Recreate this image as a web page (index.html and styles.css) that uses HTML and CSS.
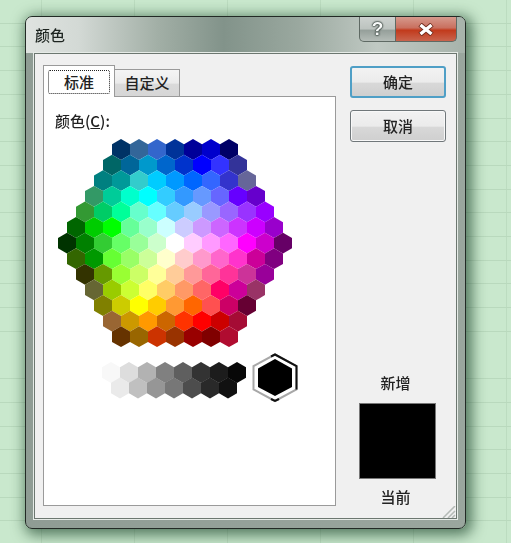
FILE: index.html
```html
<!DOCTYPE html>
<html lang="zh-CN">
<head>
<meta charset="utf-8">
<title>颜色</title>
<link rel="stylesheet" href="styles.css">
</head>
<body>
<div class="window">
  <div class="titlebar">
    <span class="title">颜色</span>
    <div class="caption-buttons">
      <div class="cap-btn help"><span>?</span></div>
      <div class="cap-btn close">
        <svg width="18" height="13" viewBox="0 0 18 13"><path d="M3 1.5 L15 11.5 M15 1.5 L3 11.5" class="x-shadow"/><path d="M3.5 2 L14.5 11 M14.5 2 L3.5 11" class="x-mark"/></svg>
      </div>
    </div>
  </div>
  <div class="panel">
    <div class="left">
      <div class="tabs">
        <div class="tab active"><span class="focus">标准</span></div>
        <div class="tab">自定义</div>
      </div>
      <div class="page">
        <div class="label">颜色(<u>C</u>):</div>
        <svg class="palette" width="291" height="280" viewBox="44 131 291 280">
          <defs>
            <polygon id="h" points="0,-10.4 9,-5.2 9,5.2 0,10.4 -9,5.2 -9,-5.2"/>
          </defs>
          <g transform="translate(121 149.5)">
            <use href="#h" x="0" fill="#003366"/><use href="#h" x="18" fill="#336699"/><use href="#h" x="36" fill="#3366CC"/><use href="#h" x="54" fill="#003399"/><use href="#h" x="72" fill="#000099"/><use href="#h" x="90" fill="#0000CC"/><use href="#h" x="108" fill="#000066"/>
          </g>
          <g transform="translate(112 165.1)">
            <use href="#h" x="0" fill="#006666"/><use href="#h" x="18" fill="#006699"/><use href="#h" x="36" fill="#0099CC"/><use href="#h" x="54" fill="#0066CC"/><use href="#h" x="72" fill="#0033CC"/><use href="#h" x="90" fill="#0000FF"/><use href="#h" x="108" fill="#3333FF"/><use href="#h" x="126" fill="#333399"/>
          </g>
          <g transform="translate(103 180.7)">
            <use href="#h" x="0" fill="#008080"/><use href="#h" x="18" fill="#009999"/><use href="#h" x="36" fill="#33CCCC"/><use href="#h" x="54" fill="#00CCFF"/><use href="#h" x="72" fill="#0099FF"/><use href="#h" x="90" fill="#0066FF"/><use href="#h" x="108" fill="#3366FF"/><use href="#h" x="126" fill="#3333CC"/><use href="#h" x="144" fill="#666699"/>
          </g>
          <g transform="translate(94 196.3)">
            <use href="#h" x="0" fill="#339966"/><use href="#h" x="18" fill="#00CC99"/><use href="#h" x="36" fill="#00FFCC"/><use href="#h" x="54" fill="#00FFFF"/><use href="#h" x="72" fill="#33CCFF"/><use href="#h" x="90" fill="#3399FF"/><use href="#h" x="108" fill="#6699FF"/><use href="#h" x="126" fill="#6666FF"/><use href="#h" x="144" fill="#6600FF"/><use href="#h" x="162" fill="#6600CC"/>
          </g>
          <g transform="translate(85 211.9)">
            <use href="#h" x="0" fill="#339933"/><use href="#h" x="18" fill="#00CC66"/><use href="#h" x="36" fill="#00FF99"/><use href="#h" x="54" fill="#66FFCC"/><use href="#h" x="72" fill="#66FFFF"/><use href="#h" x="90" fill="#66CCFF"/><use href="#h" x="108" fill="#99CCFF"/><use href="#h" x="126" fill="#9999FF"/><use href="#h" x="144" fill="#9966FF"/><use href="#h" x="162" fill="#9933FF"/><use href="#h" x="180" fill="#9900FF"/>
          </g>
          <g transform="translate(76 227.5)">
            <use href="#h" x="0" fill="#006600"/><use href="#h" x="18" fill="#00CC00"/><use href="#h" x="36" fill="#00FF00"/><use href="#h" x="54" fill="#66FF99"/><use href="#h" x="72" fill="#99FFCC"/><use href="#h" x="90" fill="#CCFFFF"/><use href="#h" x="108" fill="#CCCCFF"/><use href="#h" x="126" fill="#CC99FF"/><use href="#h" x="144" fill="#CC66FF"/><use href="#h" x="162" fill="#CC33FF"/><use href="#h" x="180" fill="#CC00FF"/><use href="#h" x="198" fill="#9900CC"/>
          </g>
          <g transform="translate(67 243.1)">
            <use href="#h" x="0" fill="#003300"/><use href="#h" x="18" fill="#008000"/><use href="#h" x="36" fill="#33CC33"/><use href="#h" x="54" fill="#66FF66"/><use href="#h" x="72" fill="#99FF99"/><use href="#h" x="90" fill="#CCFFCC"/><use href="#h" x="108" fill="#FFFFFF"/><use href="#h" x="126" fill="#FFCCFF"/><use href="#h" x="144" fill="#FF99FF"/><use href="#h" x="162" fill="#FF66FF"/><use href="#h" x="180" fill="#FF00FF"/><use href="#h" x="198" fill="#CC00CC"/><use href="#h" x="216" fill="#660066"/>
          </g>
          <g transform="translate(76 258.7)">
            <use href="#h" x="0" fill="#336600"/><use href="#h" x="18" fill="#009900"/><use href="#h" x="36" fill="#66FF33"/><use href="#h" x="54" fill="#99FF66"/><use href="#h" x="72" fill="#CCFF99"/><use href="#h" x="90" fill="#FFFFCC"/><use href="#h" x="108" fill="#FFCCCC"/><use href="#h" x="126" fill="#FF99CC"/><use href="#h" x="144" fill="#FF66CC"/><use href="#h" x="162" fill="#FF33CC"/><use href="#h" x="180" fill="#CC0099"/><use href="#h" x="198" fill="#800080"/>
          </g>
          <g transform="translate(85 274.3)">
            <use href="#h" x="0" fill="#333300"/><use href="#h" x="18" fill="#669900"/><use href="#h" x="36" fill="#99FF33"/><use href="#h" x="54" fill="#CCFF66"/><use href="#h" x="72" fill="#FFFF99"/><use href="#h" x="90" fill="#FFCC99"/><use href="#h" x="108" fill="#FF9999"/><use href="#h" x="126" fill="#FF6699"/><use href="#h" x="144" fill="#FF3399"/><use href="#h" x="162" fill="#CC3399"/><use href="#h" x="180" fill="#990099"/>
          </g>
          <g transform="translate(94 289.9)">
            <use href="#h" x="0" fill="#666633"/><use href="#h" x="18" fill="#99CC00"/><use href="#h" x="36" fill="#CCFF33"/><use href="#h" x="54" fill="#FFFF66"/><use href="#h" x="72" fill="#FFCC66"/><use href="#h" x="90" fill="#FF9966"/><use href="#h" x="108" fill="#FF6666"/><use href="#h" x="126" fill="#FF0066"/><use href="#h" x="144" fill="#CC0099"/><use href="#h" x="162" fill="#993366"/>
          </g>
          <g transform="translate(103 305.5)">
            <use href="#h" x="0" fill="#808000"/><use href="#h" x="18" fill="#CCCC00"/><use href="#h" x="36" fill="#FFFF00"/><use href="#h" x="54" fill="#FFCC00"/><use href="#h" x="72" fill="#FF9933"/><use href="#h" x="90" fill="#FF6600"/><use href="#h" x="108" fill="#FF5050"/><use href="#h" x="126" fill="#CC0066"/><use href="#h" x="144" fill="#660033"/>
          </g>
          <g transform="translate(112 321.1)">
            <use href="#h" x="0" fill="#996633"/><use href="#h" x="18" fill="#CC9900"/><use href="#h" x="36" fill="#FF9900"/><use href="#h" x="54" fill="#CC6600"/><use href="#h" x="72" fill="#FF3300"/><use href="#h" x="90" fill="#FF0000"/><use href="#h" x="108" fill="#CC0000"/><use href="#h" x="126" fill="#A50C35"/>
          </g>
          <g transform="translate(121 336.7)">
            <use href="#h" x="0" fill="#663300"/><use href="#h" x="18" fill="#996600"/><use href="#h" x="36" fill="#CC3300"/><use href="#h" x="54" fill="#993300"/><use href="#h" x="72" fill="#990000"/><use href="#h" x="90" fill="#800000"/><use href="#h" x="108" fill="#B00C30"/>
          </g>
          <g transform="translate(111 372.5)">
            <use href="#h" x="0" fill="#F8F8F8"/><use href="#h" x="18" fill="#DDDDDD"/><use href="#h" x="36" fill="#B2B2B2"/><use href="#h" x="54" fill="#808080"/><use href="#h" x="72" fill="#5F5F5F"/><use href="#h" x="90" fill="#333333"/><use href="#h" x="108" fill="#1C1C1C"/><use href="#h" x="126" fill="#080808"/>
          </g>
          <g transform="translate(120 388)">
            <use href="#h" x="0" fill="#EAEAEA"/><use href="#h" x="18" fill="#C0C0C0"/><use href="#h" x="36" fill="#969696"/><use href="#h" x="54" fill="#777777"/><use href="#h" x="72" fill="#4D4D4D"/><use href="#h" x="90" fill="#292929"/><use href="#h" x="108" fill="#111111"/>
          </g>
          <polygon points="275,354.5 296.5,366 296.5,389.5 275,401 253.5,389.5 253.5,366" class="sel-outer"/>
          <path d="M271,356.5 L275,354.5 L296.5,366 L296.5,389.5 M279,399 L275,401 L271,399" class="sel-dark"/>
          <polygon points="275,359 292,368.5 292,387 275,396 258,387 258,368.5" class="sel-inner"/>
        </svg>
      </div>
    </div>
    <div class="right">
      <div class="btn default">确定</div>
      <div class="btn">取消</div>
      <div class="preview">
        <div class="caption">新增</div>
        <div class="swatch"></div>
        <div class="caption">当前</div>
      </div>
    </div>
    <svg class="grip" width="14" height="12" viewBox="0 0 14 12"><path d="M13 0 L1 12 M13 5 L6 12 M13 9 L10 12" class="grip-line"/></svg>
  </div>
</div>
</body>
</html>
```
FILE: styles.css
```css
* { box-sizing: border-box; }
html, body { margin: 0; height: 100%; }
body {
  width: 511px;
  height: 543px;
  overflow: hidden;
  padding: 16px 0 0 25px;
  font-family: "Noto Sans CJK SC", "Noto Sans", sans-serif;
  color: #222;
  background-color: #c9e8cd;
  background-image:
    repeating-linear-gradient(to bottom, transparent 0, transparent 22.7px, #b9d9bd 22.7px, #b9d9bd 23.7px),
    repeating-linear-gradient(to right, transparent 0, transparent 41px, #bcdcc0 41px, #bcdcc0 42px, transparent 42px, transparent 93px);
}
.window {
  position: relative;
  width: 441px;
  height: 513px;
  display: flex;
  flex-direction: column;
  border: 1px solid #222a25;
  border-radius: 7px;
  padding: 0 8px 9px 8px;
  background: linear-gradient(to right, #8f9c94 0, #9aa69e 100%);
  box-shadow: 3px 3px 14px 3px rgba(20, 60, 35, 0.65);
  filter: blur(0.35px);
}
.titlebar {
  flex: none;
  height: 36px;
  margin: 0 -8px;
  padding: 0 8px 0 9px;
  display: flex;
  justify-content: space-between;
  border-radius: 6px 6px 0 0;
  background: linear-gradient(to right, #dfe3e0 0, #d3d9d5 12%, #a2afa6 30%, #82938a 45%, #9aa89f 62%, #c0c9c3 80%, #a7b3ab 100%);
}
.title {
  font-size: 15px;
  font-weight: 500;
  line-height: 35px;
  color: #1d2420;
}
.caption-buttons { display: flex; align-items: flex-start; }
.cap-btn {
  height: 25px;
  display: flex;
  align-items: center;
  justify-content: center;
  border: 1px solid #5f6a64;
  border-top: none;
}
.help {
  width: 37px;
  border-radius: 0 0 0 5px;
  background: linear-gradient(to bottom, #cdd2cf 0, #bcc3bf 50%, #959f9a 55%, #b4bcb7 100%);
  font-family: "Liberation Sans", sans-serif;
  font-size: 19px;
  font-weight: 700;
  color: #f8faf9;
  text-shadow: 0 0 1px #1d2a24, 0 0 2px #1d2a24, 0 0 2px #1d2a24;
}
.close {
  width: 61px;
  border-left: none;
  border-radius: 0 0 5px 0;
  background: linear-gradient(to bottom, #d69a8d 0, #c9705f 45%, #c23a1c 55%, #c9644d 100%);
}
.close svg { margin-top: 1px; }
.x-shadow { fill: none; stroke: #6f2a1c; stroke-width: 5; }
.x-mark { fill: none; stroke: #fff; stroke-width: 3.4; }
.panel {
  position: relative;
  flex: 1;
  display: flex;
  padding: 12px 10px 12px 8px;
  gap: 14px;
  background: #f0f0f0;
  border: 1px solid #6c7770;
  box-shadow: 0 0 0 1px #e6ebe7;
}
.left { width: 293px; display: flex; flex-direction: column; }
.tabs { display: flex; align-items: flex-end; height: 31px; margin-bottom: -1px; }
.tab {
  position: relative;
  width: 65px;
  height: 28px;
  font-size: 15px;
  font-weight: 500;
  line-height: 25px;
  text-align: center;
  border: 1px solid #9a9a9a;
  border-left: none;
  background: linear-gradient(to bottom, #f4f4f4 0, #ebebeb 50%, #dadada 55%, #d6d6d6 100%);
}
.tab.active {
  width: 72px;
  height: 32px;
  padding: 4px;
  border-left: 1px solid #9a9a9a;
  border-bottom: none;
  background: #fff;
  z-index: 1;
}
.focus {
  display: block;
  width: 62px;
  height: 24px;
  line-height: 22px;
  border: 1px dotted #222;
  border-radius: 2px;
}
.page {
  flex: 1;
  background: #fff;
  border: 1px solid #9a9a9a;
  padding-top: 14px;
}
.label {
  font-size: 15px;
  font-weight: 500;
  line-height: 20px;
  padding-left: 11px;
}
.palette { display: block; }
.sel-outer { fill: #fff; stroke: #a8a8a8; stroke-width: 2; }
.sel-dark { fill: none; stroke: #111; stroke-width: 2; }
.sel-inner { fill: #000; }
.right { width: 96px; display: flex; flex-direction: column; gap: 12px; margin-bottom: -1px; }
.btn {
  height: 32px;
  font-size: 15px;
  font-weight: 500;
  line-height: 29px;
  text-align: center;
  border: 1px solid #70777a;
  border-radius: 3px;
  background: linear-gradient(to bottom, #f2f2f2 0, #ebebeb 50%, #d8d8d8 55%, #cfcfcf 100%);
  box-shadow: inset 0 0 0 1px #f8f8f8;
}
.btn.default {
  border: 2px solid #4f9fc6;
  line-height: 27px;
  box-shadow: none;
}
.preview {
  flex: 1;
  display: flex;
  flex-direction: column;
  justify-content: flex-end;
  align-items: center;
  padding-right: 1px;
}
.caption { font-size: 15px; font-weight: 500; line-height: 20px; margin-right: 4px; }
.swatch {
  width: 77px;
  height: 76px;
  margin: 10px 0 8px;
  background: #000;
  border: 1px solid #777;
}
.grip { position: absolute; right: 0; bottom: 0; }
.grip-line { fill: none; stroke: #b4bab6; stroke-width: 1.5; }
```
